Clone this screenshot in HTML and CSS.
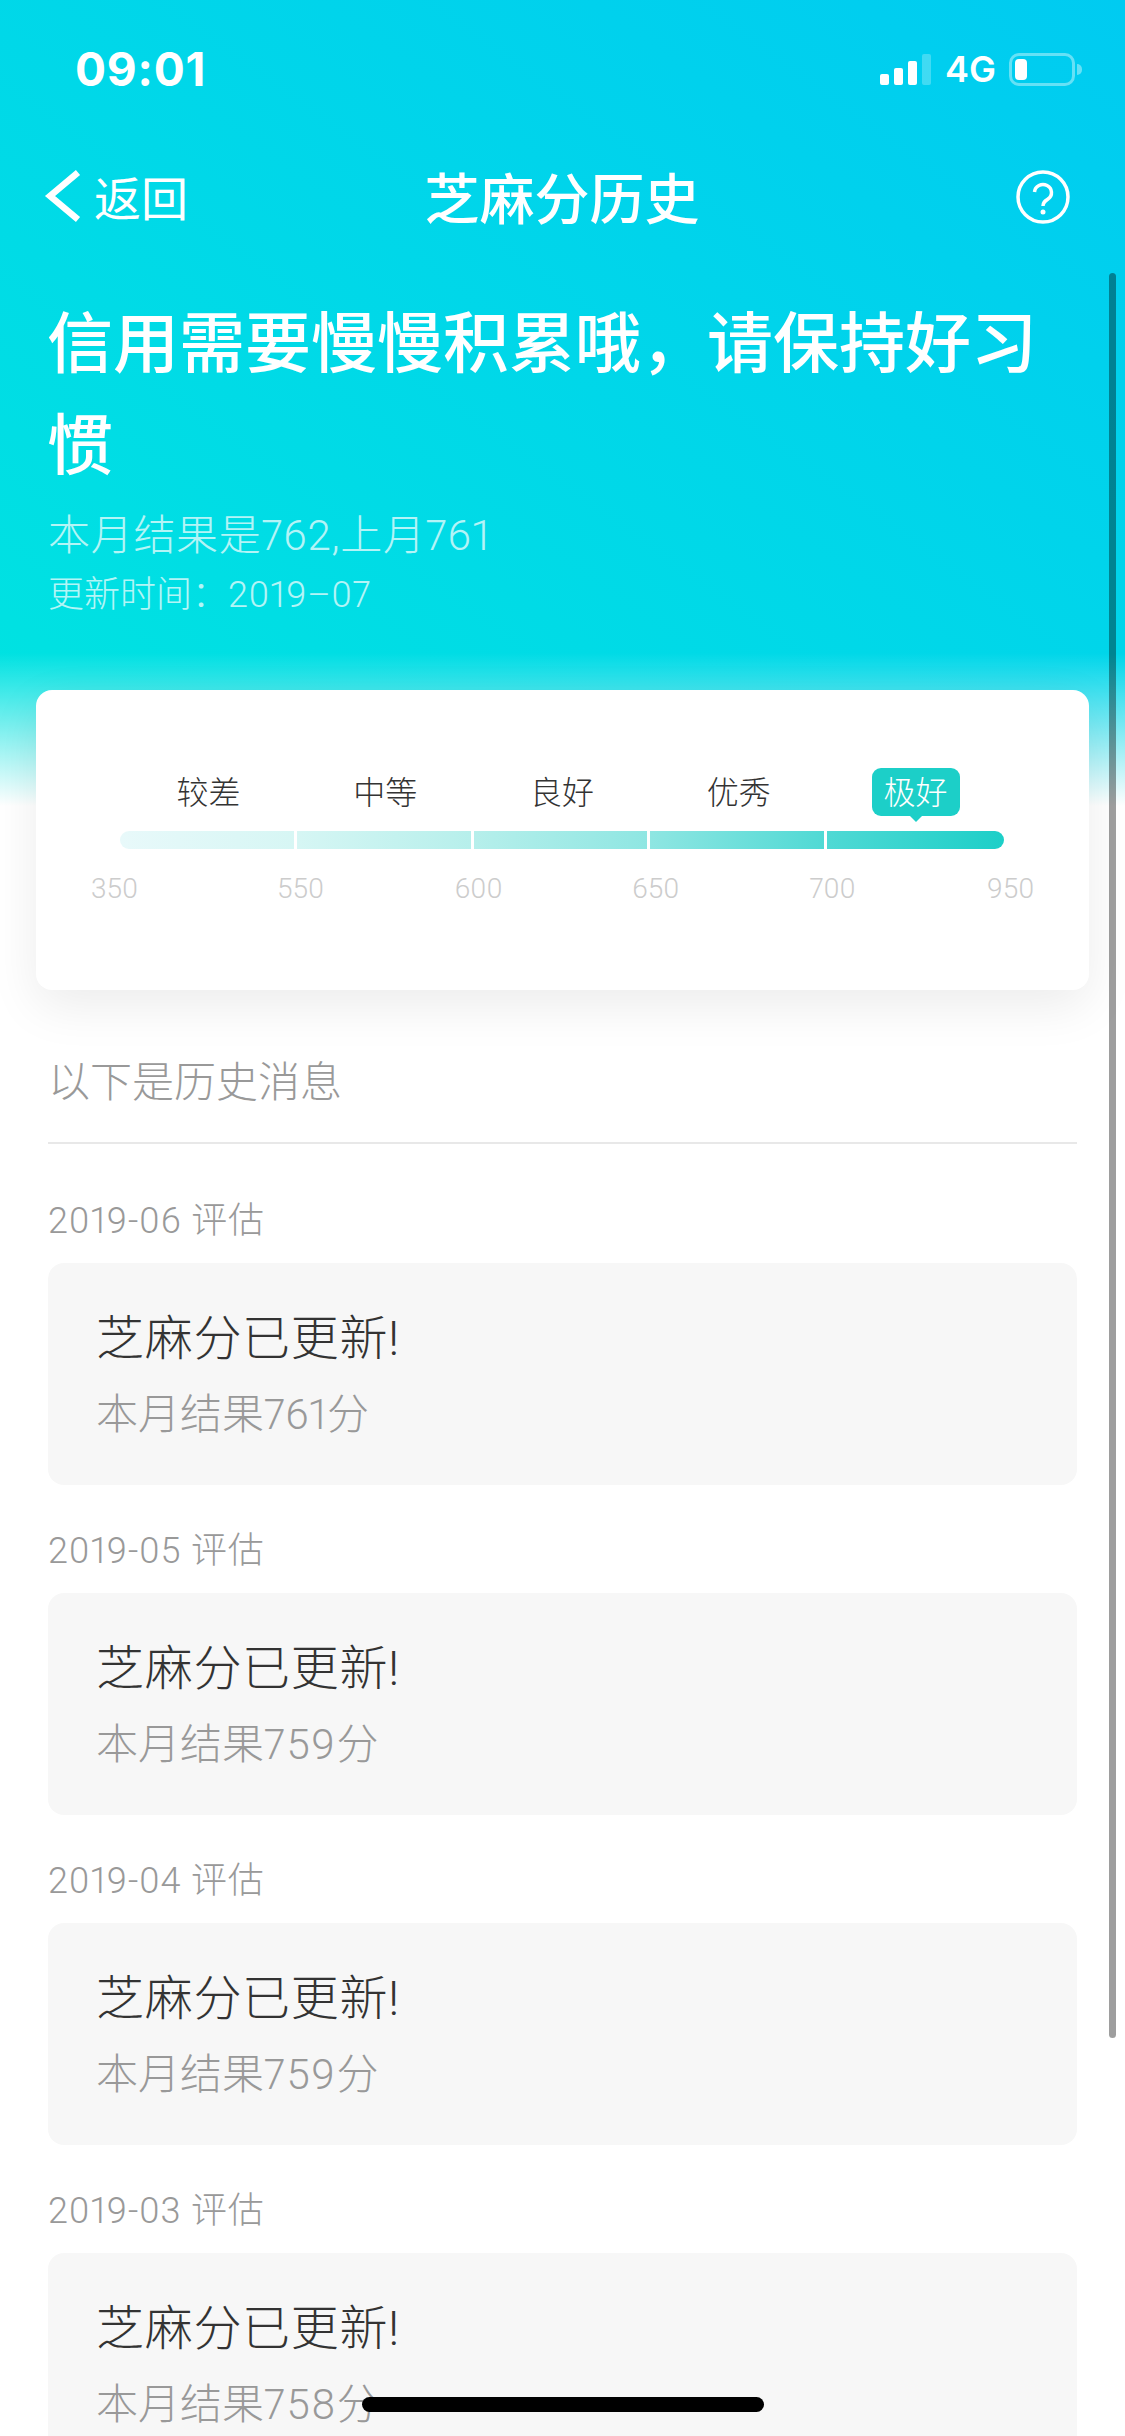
FILE: index.html
```html
<!DOCTYPE html>
<html lang="zh-CN">
<head>
  <meta charset="UTF-8">
  <title>芝麻分历史</title>
  <link rel="stylesheet" href="styles.css">
</head>
<body>
  <header class="hero">
    <div class="status">
      <span class="time">09:01</span>
      <div class="status-right">
        <div class="signal">
          <i class="sig sig1"></i><i class="sig sig2"></i><i class="sig sig3"></i><i class="sig sig4"></i>
        </div>
        <span class="net">4G</span>
        <div class="battery"><i class="battery-fill"></i></div>
        <i class="battery-nub"></i>
      </div>
    </div>

    <nav class="nav">
      <a class="back">
        <svg class="back-icon" width="37" height="52" viewBox="0 0 37 52">
          <path d="M34 2.500 L6 26 L34 49.500" fill="none" stroke="#fff" stroke-width="6.500"/>
        </svg>
        <span>返回</span>
      </a>
      <div class="nav-title">芝麻分历史</div>
      <svg class="help" width="54" height="54" viewBox="0 0 54 54">
        <circle cx="27" cy="27" r="25" fill="none" stroke="#fff" stroke-width="3.500"/>
        <path d="M18.500 22 A8.500 8 0 1 1 32 29 C29 31 27 32 27 36" fill="none" stroke="#fff" stroke-width="3.500"/>
        <circle cx="27" cy="42" r="2.500" fill="#fff"/>
      </svg>
    </nav>

    <h1 class="hero-title">信用需要慢慢积累哦，请保持好习惯</h1>
    <p class="hero-sub">本月结果是762,上月761</p>
    <p class="hero-meta">更新时间：<span class="hero-date">2019–07</span></p>
  </header>

  <section class="score-card">
    <div class="tiers">
      <div class="tier"><span>较差</span></div>
      <div class="tier"><span>中等</span></div>
      <div class="tier"><span>良好</span></div>
      <div class="tier"><span>优秀</span></div>
      <div class="tier"><span class="tier-active">极好</span></div>
    </div>
    <div class="bar">
      <i class="seg"></i><i class="seg"></i><i class="seg"></i><i class="seg"></i><i class="seg"></i>
    </div>
    <div class="ticks">
      <span>350</span><span>550</span><span>600</span><span>650</span><span>700</span><span>950</span>
    </div>
  </section>

  <main class="history">
    <h2 class="history-title">以下是历史消息</h2>

    <div class="entry">
      <div class="entry-date">2019-06 评估</div>
      <div class="entry-card">
        <div class="entry-title">芝麻分已更新!</div>
        <div class="entry-text">本月结果761分</div>
      </div>
    </div>
    <div class="entry">
      <div class="entry-date">2019-05 评估</div>
      <div class="entry-card">
        <div class="entry-title">芝麻分已更新!</div>
        <div class="entry-text">本月结果<span class="num">759</span>分</div>
      </div>
    </div>
    <div class="entry">
      <div class="entry-date">2019-04 评估</div>
      <div class="entry-card">
        <div class="entry-title">芝麻分已更新!</div>
        <div class="entry-text">本月结果<span class="num">759</span>分</div>
      </div>
    </div>
    <div class="entry">
      <div class="entry-date">2019-03 评估</div>
      <div class="entry-card">
        <div class="entry-title">芝麻分已更新!</div>
        <div class="entry-text">本月结果<span class="num">758</span>分</div>
      </div>
    </div>
  </main>

  <div class="scrollbar"></div>
  <div class="home-indicator"></div>
</body>
</html>
```

FILE: styles.css
```css
html, body {
  margin: 0;
  height: 2436px;
  overflow: hidden;
  background: #fff;
}
body {
  position: relative;
  font-family: Roboto, "Noto Sans CJK SC", sans-serif;
  font-weight: 300;
  font-variant-numeric: proportional-nums;
}

/* header */
.hero {
  height: 806px;
  color: #fff;
  background:
    linear-gradient(to bottom, rgba(255,255,255,0) 81%, #fff 100%),
    linear-gradient(to top right, #00e4e0, #00cbf1);
}
.status {
  height: 138px;
  padding: 0 43px 0 75px;
  display: flex;
  align-items: center;
  justify-content: space-between;
}
.time {
  font-family: Inter, sans-serif;
  font-size: 46px;
  font-weight: 700;
  letter-spacing: .8px;
}
.status-right {
  display: flex;
  align-items: center;
}
.signal {
  display: flex;
  align-items: flex-end;
  gap: 5px;
  height: 31px;
}
.sig {
  width: 9px;
  background: #fff;
  border-radius: 2px;
}
.sig1 { height: 11px; }
.sig2 { height: 17px; }
.sig3 { height: 24px; }
.sig4 { height: 31px; opacity: .25; }
.net {
  font-family: Inter, sans-serif;
  font-size: 36px;
  font-weight: 600;
  margin: 0 13px 0 14px;
}
.battery {
  box-sizing: border-box;
  width: 66px;
  height: 33px;
  padding: 3px;
  border: 3px solid rgba(255,255,255,.4);
  border-radius: 10px;
}
.battery-fill {
  display: block;
  width: 12px;
  height: 100%;
  background: #fff;
  border-radius: 4px;
}
.battery-nub {
  width: 5px;
  height: 11px;
  margin-left: 2px;
  background: rgba(255,255,255,.4);
  border-radius: 0 5px 5px 0;
}

.nav {
  height: 118px;
  padding: 0 55px 0 44px;
  display: grid;
  grid-template-columns: 1fr auto 1fr;
  align-items: center;
}
.back {
  display: flex;
  align-items: center;
  gap: 13px;
  font-size: 47px;
  font-weight: 400;
  margin-top: -3px;
}
.nav-title {
  font-size: 55px;
  font-weight: 500;
  margin: -5px 0 0 10px;
}
.help {
  justify-self: end;
}

.hero-title {
  margin: 38px 0 0;
  padding: 0 47px;
  font-size: 66px;
  line-height: 102px;
  font-weight: 500;
}
.hero-sub {
  margin: 8px 0 0;
  padding: 0 48px;
  font-size: 42px;
  line-height: 60px;
  letter-spacing: .7px;
  opacity: .7;
}
.hero-meta {
  margin: 4px 0 0;
  padding: 0 48px;
  font-size: 36px;
  line-height: 50px;
  opacity: .7;
}
.hero-date {
  letter-spacing: .6px;
}

/* score range card */
.score-card {
  position: relative;
  box-sizing: border-box;
  height: 300px;
  margin: -116px 36px 0;
  padding: 78px 85px 0 84px;
  background: #fff;
  border-radius: 16px;
  box-shadow: 0 16px 50px rgba(0,0,0,.08);
}
.tiers {
  display: grid;
  grid-template-columns: repeat(5, 1fr);
  height: 48px;
}
.tier {
  text-align: center;
  font-size: 32px;
  line-height: 50px;
  color: #333;
}
.tier-active {
  position: relative;
  display: inline-block;
  height: 48px;
  padding: 0 12px;
  color: #fff;
  background: #1ccfc8;
  border-radius: 9px;
}
.tier-active::after {
  content: "";
  position: absolute;
  left: 50%;
  top: 100%;
  margin-left: -6px;
  border: 6px solid transparent;
  border-bottom: 0;
  border-top-color: #1ccfc8;
}
.bar {
  display: grid;
  grid-template-columns: repeat(5, 1fr);
  height: 18px;
  margin-top: 15px;
  border-radius: 9px;
  overflow: hidden;
  background: linear-gradient(to right, #e8f9fa, #d6f6f4 20%, #b6efeb 40%, #8ee6e2 60%, #4fd9d4 80%, #1ccfc8);
}
.seg:not(:last-child) {
  border-right: 3px solid #fff;
}
.ticks {
  display: flex;
  margin: 22px 0 0 -29px;
  font-size: 28px;
  line-height: 36px;
  color: #ccc;
}
.ticks span {
  width: 46px;
  margin-right: 131.500px;
  text-align: center;
}
.ticks span:first-child {
  margin-right: 140px;
}

/* history list */
.history {
  padding: 0 48px;
}
.history-title {
  margin: 63px 0 0;
  padding: 0 0 29px 0;
  font-size: 42px;
  line-height: 60px;
  font-weight: 300;
  color: #999;
  border-bottom: 2px solid #e8e8e8;
}
.history-title + .entry {
  margin-top: 52px;
}
.entry {
  margin-top: 41px;
}
.entry-date {
  font-size: 36px;
  line-height: 50px;
  letter-spacing: .8px;
  color: #999;
}
.entry-card {
  height: 222px;
  box-sizing: border-box;
  margin-top: 17px;
  padding: 46px 48px 0;
  background: #f7f7f7;
  border-radius: 16px;
}
.entry-title {
  font-size: 48px;
  line-height: 60px;
  letter-spacing: .7px;
  color: #333;
}
.entry-text {
  margin-top: 16px;
  font-size: 42px;
  line-height: 60px;
  color: #999;
}
.num {
  letter-spacing: 1.500px;
}

/* overlays */
.scrollbar {
  position: absolute;
  left: 1109px;
  top: 273px;
  width: 7px;
  height: 1765px;
  border-radius: 4px;
  background: rgba(0,0,0,.38);
}
.home-indicator {
  position: absolute;
  left: 362px;
  top: 2397px;
  width: 402px;
  height: 15px;
  border-radius: 8px;
  background: #000;
}
```
